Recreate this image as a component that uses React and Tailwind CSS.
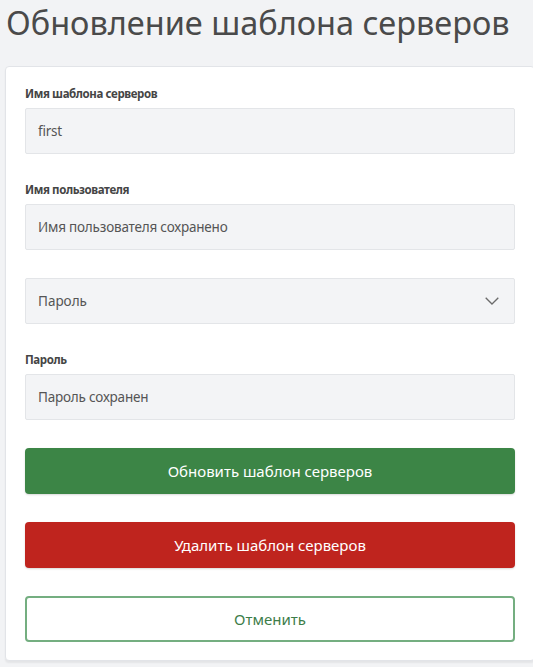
import { useState } from 'react';

function Field({ label, value }) {
  return (
    <div className="flex flex-col gap-[6px]">
      <label className="text-[11.5px] leading-[16px] font-bold text-[#454545] tracking-[-0.4px]">{label}</label>
      <div className="h-[46px] flex items-center px-[12px] bg-[#f3f4f6] border border-[#e3e5e8] rounded-[2px] text-[13.5px] text-[#555] tracking-[-0.2px]">
        {value}
      </div>
    </div>
  );
}

export default function App() {
  const [auth] = useState('Пароль');

  return (
    <div className="min-h-screen bg-[#f2f3f5] pl-[5px]" style={{ fontFamily: '"Noto Sans", "Open Sans", sans-serif' }}>
      <h1 className="h-[66px] pt-[3px] text-[32.5px] leading-[40px] text-[#4a4a4a] pl-[1px]">
        Обновление шаблона серверов
      </h1>

      <div className="w-[530px] bg-white border border-[#e2e4e8] rounded-[4px] shadow-[0_2px_2px_rgba(0,0,0,0.06)] pt-[19px] pb-[18px] px-[19px] flex flex-col gap-[28px]">
        <Field label="Имя шаблона серверов" value="first" />
        <Field label="Имя пользователя" value="Имя пользователя сохранено" />

        <div className="h-[46px] flex items-center justify-between pl-[12px] pr-[15px] bg-[#f3f4f6] border border-[#e3e5e8] rounded-[2px] text-[13.5px] text-[#555]">
          <span>{auth}</span>
          <svg width="14" height="8" viewBox="0 0 14 8" fill="none">
            <path d="M0.7 0.7 L7 7 L13.3 0.7" stroke="#6b6b6b" strokeWidth="1.3" />
          </svg>
        </div>

        <Field label="Пароль" value="Пароль сохранен" />

        <button className="h-[46px] rounded-[4px] bg-[#3c8546] text-white text-[15px] shadow-[0_1px_2px_rgba(0,0,0,0.15)]">
          Обновить шаблон серверов
        </button>
        <button className="h-[46px] rounded-[4px] bg-[#bf241e] text-white text-[15px] shadow-[0_1px_2px_rgba(0,0,0,0.15)]">
          Удалить шаблон серверов
        </button>
        <button className="h-[46px] rounded-[4px] bg-white border-2 border-[#74ae80] text-[#3d7d49] text-[15px]">
          Отменить
        </button>
      </div>
    </div>
  );
}
